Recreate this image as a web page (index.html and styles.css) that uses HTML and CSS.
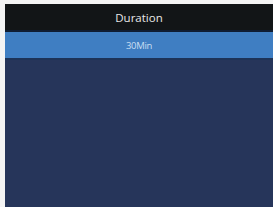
FILE: index.html
```html
<!DOCTYPE html>
<html lang="en">
<head>
  <meta charset="UTF-8" />
  <title>Duration</title>
  <link rel="stylesheet" href="styles.css">
</head>
<body>
  <div class="screen">
    <div class="title-bar">Duration</div>
    <ul class="options">
      <li class="option selected">30Min</li>
    </ul>
  </div>
</body>
</html>
```

FILE: styles.css
```css
body {
  margin: 0;
  background: #f4f4f4;
  font-family: 'Open Sans', sans-serif;
}

.screen {
  margin: 4px 0 0 5px;
  height: 203px;
  background: #26355a;
  display: flex;
  flex-direction: column;
}

.title-bar {
  height: 26px;
  background: #121517;
  color: #e8e8e8;
  font-size: 11.5px;
  display: flex;
  align-items: center;
  justify-content: center;
  border-bottom: 2px solid #0f1d33;
}

.options {
  list-style: none;
  margin: 0;
  padding: 0;
}

.option {
  height: 26px;
  display: flex;
  align-items: center;
  justify-content: center;
  font-size: 9.5px;
  letter-spacing: -0.3px;
  color: #c9def2;
}

.option.selected {
  background: #3f7ec2;
  border-bottom: 2px solid #1d3357;
}
```
